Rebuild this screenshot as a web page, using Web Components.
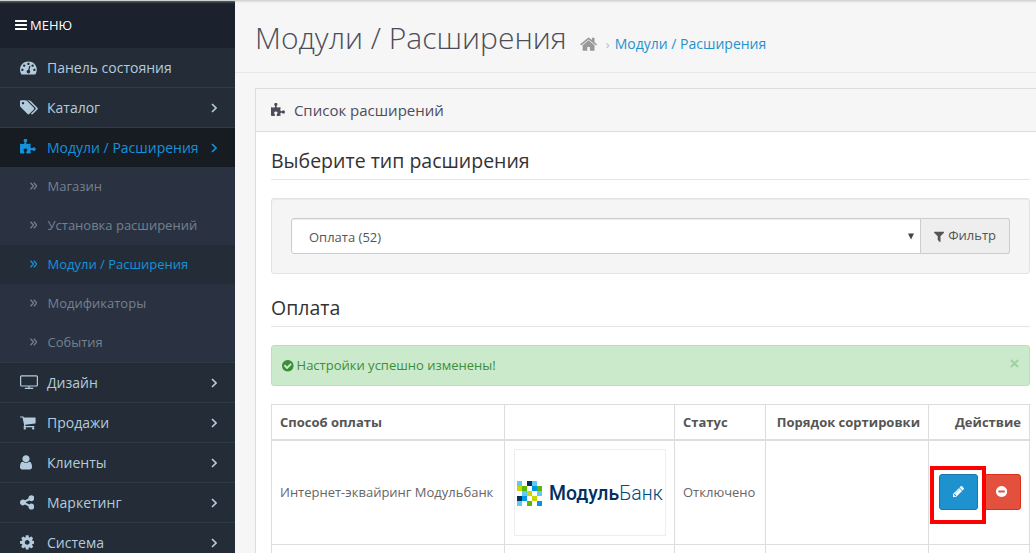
<!DOCTYPE html>
<html lang="ru">
<head>
<meta charset="utf-8">
<title>Модули / Расширения</title>
<style>
html,body{margin:0;height:100%;overflow:hidden}
body{background:#f6f6f6;font:13px/20px "Open Sans","Noto Sans",sans-serif;color:#666}
</style>
</head>
<body>
<admin-app></admin-app>
<script>
const disc = 'q0 209-103 385.5t-279.5 279.5-385.5 103-385.5-103-279.5-279.5-103-385.5 103-385.5 279.5-279.5 385.5-103 385.5 103 279.5 279.5 103 385.5z';
const dot = 'q0-53-37.5-90.5t-90.5-37.5-90.5 37.5-37.5 90.5 37.5 90.5 90.5 37.5 90.5-37.5 37.5-90.5z';
const wheel = 'q0 52-38 90t-90 38-90-38-38-90 38-90 90-38 90 38 38 90z';
const bar = 'v128q0 26-19 45t-45 19h-1408q-26 0-45-19t-19-45v-128q0-26 19-45t45-19h1408q26 0 45 19t19 45z';
// name: [left edge, advance width, path], in units of 1792 per em
const ICONS = {
  bars: [128, 1536, `M1664 1344${bar}M1664 832${bar}M1664 320${bar}`],
  dashboard: [0, 1792, `M384 1152${dot}M576 704${dot}M1004 1185l101-382q6-26-7.5-48.5t-38.5-29.5-48 6.5-30 39.5l-101 382q-60 5-107 43.5t-63 98.5q-20 77 20 146t117 89 146-20 89-117q16-60-6-117t-72-91zM1664 1152${dot}M1024 512${dot}M1472 704${dot}M1792 1152q0 261-141 483-19 29-54 29h-1402q-35 0-54-29-141-221-141-483 0-182 71-348t191-286 286-191 348-71 348 71 286 191 191 286 71 348z`],
  tags: [128, 1920, `M576 448${dot}M1643 1024q0 53-37 90l-491 492q-39 37-91 37-53 0-90-37l-715-716q-38-37-64.500-101t-26.500-117v-416q0-52 38-90t90-38h416q53 0 117 26.500t102 64.500l715 714q37 39 37 91zM2027 1024q0 53-37 90l-491 492q-39 37-91 37-36 0-59-14t-53-45l470-470q37-37 37-90 0-52-37-91l-715-714q-38-38-102-64.500t-117-26.500h224q53 0 117 26.500t102 64.500l715 714q37 39 37 91z`],
  puzzle: [91, 1664, 'M1755 1083q0 81-44.500 135t-123.500 54q-41 0-77.500-17.500t-59-38-56.500-38-71-17.500q-110 0-110 124 0 39 16 115t15 115v5q-22 0-33 1-34 3-97.500 11.500t-115.500 13.500-98 5q-61 0-103-26.500t-42-83.500q0-37 17.500-71t38-56.500 38-59 17.500-77.500q0-79-54-123.500t-135-44.500q-84 0-143 45.500t-59 127.500q0 43 15 83t33.500 64.500 33.500 53 15 50.500q0 45-46 89-37 35-117 35-95 0-245-24-9-2-27.500-4t-27.500-4l-13-2q-1 0-3-1-2 0-2-1v-1024q2 1 17.500 3.500t34 5 21.500 3.500q150 24 245 24 80 0 117-35 46-44 46-89 0-22-15-50.500t-33.500-53-33.500-64.500-15-83q0-82 59-127.500t144-45.500q80 0 134 44.500t54 123.500q0 41-17.500 77.500t-38 59-38 56.500-17.500 71q0 57 42 83.500t103 26.500q64 0 180-15t163-17v2q-1 2-3.500 17.500t-5 34-3.500 21.500q-24 150-24 245 0 80 35 117 44 46 89 46 22 0 50.500-15t53-33.500 64.500-33.500 83-15q82 0 127.500 59t45.500 143z'],
  television: [-64, 1920, 'M96 128h1600q66 0 113 47t47 113v896q0 66-47 113t-113 47h-736v128h352q32 0 32 32v64q0 32-32 32h-832q-32 0-32-32v-64q0-32 32-32h352v-128h-736q-66 0-113-47t-47-113v-896q0-66 47-113t113-47zM96 256q-32 0-32 32v896q0 32 32 32h1600q32 0 32-32v-896q0-32-32-32z'],
  cart: [64, 1664, `M704 1536${wheel}M1600 1536${wheel}M1728 448v512q0 24-16.500 42.500t-40.500 21.500l-1044 122q13 60 13 70 0 16-24 64h920q26 0 45 19t19 45-19 45-45 19h-1024q-26 0-45-19t-19-45q0-11 8-31.500t16-36 21.500-40 15.500-29.500l-177-823h-204q-26 0-45-19t-19-45 19-45 45-19h256q16 0 28.500 6.500t19.500 15.500 13 24.500 8 26 5.500 29.500 4.500 26h1201q26 0 45 19t19 45z`],
  user: [256, 1280, 'M1536 1399q0 109-62.500 187t-150.500 78h-854q-88 0-150.500-78t-62.500-187q0-85 8.500-160.500t31.500-152 58.500-131 94-89 134.500-34.500q131 128 313 128t313-128q76 0 134.500 34.500t94 89 58.500 131 31.500 152 8.500 160.500zm-256-887q0 159-112.500 271.500t-271.500 112.500-271.500-112.500-112.500-271.500 112.500-271.500 271.500-112.500 271.500 112.500 112.500 271.500z'],
  share: [128, 1536, 'M1344 1024q133 0 226.500 93.500t93.500 226.500-93.500 226.500-226.500 93.500-226.500-93.500-93.500-226.500q0-12 2-34l-360-180q-92 86-218 86-133 0-226.500-93.500t-93.500-226.500 93.500-226.500 226.500-93.500q126 0 218 86l360-180q-2-22-2-34 0-133 93.500-226.500t226.500-93.500 226.500 93.500 93.500 226.500-93.500 226.500-226.500 93.500q-126 0-218-86l-360 180q2 22 2 34t-2 34l360 180q92-86 218-86z'],
  cog: [128, 1536, 'M1152 896q0-106-75-181t-181-75-181 75-75 181 75 181 181 75 181-75 75-181zm512-109v222q0 12-8 23t-20 13l-185 28q-19 54-39 91 35 50 107 138 10 12 10 25t-9 23q-27 37-99 108t-94 71q-12 0-26-9l-138-108q-44 23-91 38-16 136-29 186-7 28-36 28h-222q-14 0-24.500-8.500t-11.500-21.500l-28-184q-49-16-90-37l-141 107q-10 9-25 9-14 0-25-11-126-114-165-168-7-10-7-23 0-12 8-23 15-21 51-66.500t54-70.500q-27-50-41-99l-183-27q-13-2-21-12.500t-8-23.500v-222q0-12 8-23t19-13l186-28q14-46 39-92-40-57-107-138-10-12-10-24 0-10 9-23 26-36 98.500-107.500t94.500-71.500q13 0 26 10l138 107q44-23 91-38 16-136 29-186 7-28 36-28h222q14 0 24.500 8.500t11.500 21.500l28 184q49 16 90 37l142-107q9-9 24-9 13 0 25 10 129 119 165 170 7 8 7 22 0 12-8 23-15 21-51 66.500t-54 70.500q26 50 41 98l183 28q13 2 21 12.500t8 23.500z'],
  home: [64, 1664, 'M1472 992v480q0 26-19 45t-45 19h-384v-384h-256v384h-384q-26 0-45-19t-19-45v-480q0-1 .5-3t.5-3l575-474 575 474q1 2 1 6zm223-69l-62 74q-8 9-21 11h-3q-13 0-21-7l-692-577-692 577q-12 8-24 7-13-2-21-11l-62-74q-8-10-7-23.500t11-21.500l719-599q32-26 76-26t76 26l244 204v-195q0-14 9-23t23-9h192q14 0 23 9t9 23v408l219 182q10 8 11 21.500t-7 23.500z'],
  check: [128, 1536, `M1412 734q0-28-18-46l-91-90q-19-19-45-19t-45 19l-408 407-226-226q-19-19-45-19t-45 19l-91 90q-18 18-18 46 0 27 18 45l362 362q19 19 45 19 27 0 46-19l543-543q18-18 18-45zM1664 896${disc}`],
  minus: [128, 1536, `M1344 960v-128q0-26-19-45t-45-19h-768q-26 0-45 19t-19 45v128q0 26 19 45t45 19h768q26 0 45-19t19-45zM1664 896${disc}`],
  filter: [192, 1408, 'M1595 295q17 41-14 70l-493 493v742q0 42-39 59-13 5-25 5-27 0-45-19l-256-256q-19-19-19-45v-486l-493-493q-31-29-14-70 17-39 59-39h1280q42 0 59 39z'],
  pencil: [128, 1536, 'M491 1536l91-91-235-235-91 91v107h128v128h107zm523-928q0-22-22-22-10 0-17 7l-542 542q-7 7-7 17 0 22 22 22 10 0 17-7l542-542q7-7 7-17zm-54-192l416 416-832 832h-416v-416zm683 96q0 53-37 90l-166 166-416-416 166-165q36-38 90-38 53 0 91 38l235 234q37 39 37 91z']
};

function define(name, markup) {
  customElements.define(name, class extends HTMLElement {
    constructor() {
      super();
      this.attachShadow({mode: 'open'}).innerHTML = typeof markup === 'function' ? markup(this) : markup;
    }
  });
}

// A glyph scaled so that 1em is "size" pixels
define('fa-icon', el => {
  const [x, w, d] = ICONS[el.getAttribute('name')];
  const s = +el.getAttribute('size') || 13;
  return `<style>:host{display:inline-block;line-height:0}svg{display:block;fill:currentColor}</style>
  <svg width="${w / 1792 * s}" height="${s}" viewBox="${x} 0 ${w} 1792"><path fill-rule="evenodd" d="${d}"/></svg>`;
});

define('nav-item', el => `<style>
:host{display:flex;align-items:center;box-sizing:border-box;height:40px;border-top:1px solid #2e3b46;padding:0 18px 0 20px;background:#242d37;color:#b3cbdd;font-size:14px}
:host([first]){height:39px;border-top:0}
:host([active]){background:#171b22;color:#1492dc}
.i{width:27px;display:flex}
.t{flex:1;white-space:nowrap}
.a{display:block;fill:none;stroke:currentColor;stroke-width:1.6}
</style><span class="i"><fa-icon name="${el.getAttribute('icon')}" size="16.8"></fa-icon></span><span class="t"><slot></slot></span>
${el.hasAttribute('first') ? '' : '<svg class="a" width="6" height="10" viewBox="0 0 6 10"><path d="M1 1l4 4-4 4"/></svg>'}`);

define('sub-item', `<style>
:host{display:flex;align-items:center;box-sizing:border-box;height:39px;padding:0 0 1px 30px;gap:10.500px;background:#2a3140;color:#73818f;font-size:13px;white-space:nowrap}
:host([active]){background:#242d37;color:#1492dc}
svg{fill:none;stroke:currentColor;stroke-width:1.3}
</style><svg width="7" height="8" viewBox="0 0 7 8"><path d="M.5 .7L3.500 4l-3 3.300M3.800 .7l3 3.300-3 3.300"/></svg><span><slot></slot></span>`);

define('side-nav', `<style>
:host{display:block;width:235px;height:100%;background:#242d37;overflow:hidden}
.h{display:flex;align-items:center;gap:3px;height:48px;padding:1px 0 0 15px;box-sizing:border-box;background:linear-gradient(#cfd1d1 1px,#4d575b 1px,#4d575b 2px,#333d43 2px,#333d43 3px,#222a34 3px,#1b212d 5px);color:#fff;font-size:13px}
</style>
<div class="h"><fa-icon name="bars" size="14"></fa-icon><span>МЕНЮ</span></div>
<nav-item first icon="dashboard">Панель состояния</nav-item>
<nav-item icon="tags">Каталог</nav-item>
<nav-item icon="puzzle" active>Модули / Расширения</nav-item>
<sub-item>Магазин</sub-item>
<sub-item>Установка расширений</sub-item>
<sub-item active>Модули / Расширения</sub-item>
<sub-item>Модификаторы</sub-item>
<sub-item>События</sub-item>
<nav-item icon="television">Дизайн</nav-item>
<nav-item icon="cart">Продажи</nav-item>
<nav-item icon="user">Клиенты</nav-item>
<nav-item icon="share">Маркетинг</nav-item>
<nav-item icon="cog">Система</nav-item>`);

define('page-header', `<style>
:host{display:flex;align-items:baseline;box-sizing:border-box;height:73px;padding:18px 0 0 20px;border-bottom:1px solid #e7e7e7;white-space:nowrap;background:linear-gradient(#d3d3d3 1px,#e4e4e4 1px,#e4e4e4 2px,#f6f6f6 3px)}
h1{margin:0;font-size:30px;line-height:40px;font-weight:300;color:#4c4d5a}
fa-icon{color:#999;margin-left:13px;align-self:flex-start;margin-top:17px}
.s{color:#bbb;margin:0 5px 0 9px}
.c{color:#1e91cf;font-size:14px}
</style><h1>Модули / Расширения</h1><fa-icon name="home" size="18.500"></fa-icon><span class="s">›</span><span class="c">Модули / Расширения</span>`);

define('section-title', `<style>:host{display:block;box-sizing:border-box;height:37px;border-bottom:1px solid #e5e5e5;color:#333;font-size:19.500px;line-height:36px}</style><slot></slot>`);

define('filter-bar', `<style>
:host{display:flex;box-sizing:border-box;height:76px;padding:19px;background:#f5f5f5;border:1px solid #e3e3e3;border-radius:3px;box-shadow:inset 0 1px 1px rgba(0,0,0,.05);color:#555}
.sel{flex:1;display:flex;align-items:center;justify-content:space-between;border:1px solid #ccc;border-radius:3px 0 0 3px;background:#fff;padding:0 6px 0 17px;box-shadow:inset 0 1px 1px rgba(0,0,0,.075)}
.sel span{padding-top:2px}
.btn{display:flex;align-items:center;gap:4px;box-sizing:border-box;width:89px;border:1px solid #ccc;border-left:0;border-radius:0 3px 3px 0;background:#eee;padding:0 0 0 13px}
.btn span{padding-bottom:2px}
</style><div class="sel"><span>Оплата (52)</span><svg width="6" height="7" viewBox="0 0 6 7"><path d="M0 .5h6L3 6.500z" fill="#444"/></svg></div>
<div class="btn"><fa-icon name="filter" size="13"></fa-icon><span>Фильтр</span></div>`);

define('success-alert', `<style>
:host{display:flex;align-items:center;box-sizing:border-box;height:41px;padding:0 10px 0 10px;background:#cbeacb;border:1px solid #bae0ba;border-radius:3px;color:#3c8e3c}
.t{flex:1;margin-left:3px;padding-bottom:2px}
svg{margin-bottom:4px}
</style><fa-icon name="check" size="13.500"></fa-icon><span class="t"><slot></slot></span><svg width="9" height="9" viewBox="0 0 9 9"><path d="M1 1l7 7M8 1l-7 7" stroke="#a3cfa3" stroke-width="2"/></svg>`);

define('module-logo', () => {
  const colors = {l: '#5fc8f5', n: '#00305f', y: '#c8d700', g: '#5cb900', a: '#0098e0'};
  const rows = ['l.nl.', 'yg.ag', '.ly.l', 'na.y.', 'l.g.a'];
  const cells = rows.flatMap((r, y) => [...r].map((c, x) => colors[c] ? `<rect x="${x * 5}" y="${y * 5}" width="5" height="5" fill="${colors[c]}"/>` : '')).join('');
  return `<style>
:host{display:flex;align-items:center;box-sizing:border-box;width:152px;height:87px;margin-left:1px;border:1px solid #eee;padding:2px 0 0 2px;color:#00305f;white-space:nowrap}
.w{margin-left:7px;font:500 19.400px/24px Roboto,sans-serif}
.w span{font-weight:300;color:#004a7c}
</style><svg width="25" height="25" viewBox="0 0 25 25" shape-rendering="crispEdges">${cells}</svg><div class="w">Модуль<span>Банк</span></div>`;
});

define('action-button', `<style>
:host{display:flex;align-items:center;justify-content:center;box-sizing:border-box;width:39px;height:36px;border:1px solid #1978ab;border-radius:3px;background:#1e91cf;color:#fff}
:host([danger]){background:#e3503e;border-color:#dc2f1a}
</style><slot></slot>`);

define('payment-table', `<style>
:host{display:grid;grid-template-columns:233px 170px 91px 163px 101px;grid-template-rows:36px 104px 30px;border-left:1px solid #ddd;border-top:1px solid #ddd}
div{box-sizing:border-box;border-right:1px solid #ddd;border-bottom:1px solid #ddd;padding:0 8px;display:flex;align-items:center;white-space:nowrap}
.h{font-weight:700;font-size:13px;color:#555;border-bottom-width:2px}
.r{justify-content:flex-end}
.c{padding-bottom:2px}
.b{gap:4px;position:relative}
.mark{position:absolute;left:1px;top:25px;width:56px;height:58px;border:4px solid #f00;padding:0}
</style>
<div class="h">Способ оплаты</div><div class="h"></div><div class="h">Статус</div><div class="h r">Порядок сортировки</div><div class="h r">Действие</div>
<div class="c">Интернет-эквайринг Модульбанк</div><div><module-logo></module-logo></div><div class="c">Отключено</div><div></div>
<div class="r b c"><action-button><fa-icon name="pencil" size="13"></fa-icon></action-button><action-button danger><fa-icon name="minus" size="13"></fa-icon></action-button><div class="mark"></div></div>
<div></div><div></div><div></div><div></div><div></div>`);

define('extension-panel', `<style>
:host{display:block;box-sizing:border-box;width:791px;height:480px;margin:15px 0 0 20px;border:1px solid #dcdcdc;background:#fff}
.head{display:flex;align-items:center;box-sizing:border-box;height:43px;padding-left:15px;gap:9px;background:#f6f6f6;border-bottom:1px solid #dcdcdc;color:#4c4d5a;font-size:15px}
.head span{padding-bottom:1px}
.body{padding:11px 15px}
filter-bar{margin:18px 0 16px}
success-alert{margin:18px 0}
</style><div class="head"><fa-icon name="puzzle" size="15"></fa-icon><span>Список расширений</span></div>
<div class="body"><section-title>Выберите тип расширения</section-title>
<filter-bar></filter-bar>
<section-title>Оплата</section-title>
<success-alert>Настройки успешно изменены!</success-alert>
<payment-table></payment-table></div>`);

define('admin-app', `<style>
:host{display:grid;grid-template-columns:235px 1fr;height:553px;overflow:hidden;background:#f6f6f6}
main{min-width:0}
</style><side-nav></side-nav><main><page-header></page-header><extension-panel></extension-panel></main>`);
</script>
</body>
</html>
